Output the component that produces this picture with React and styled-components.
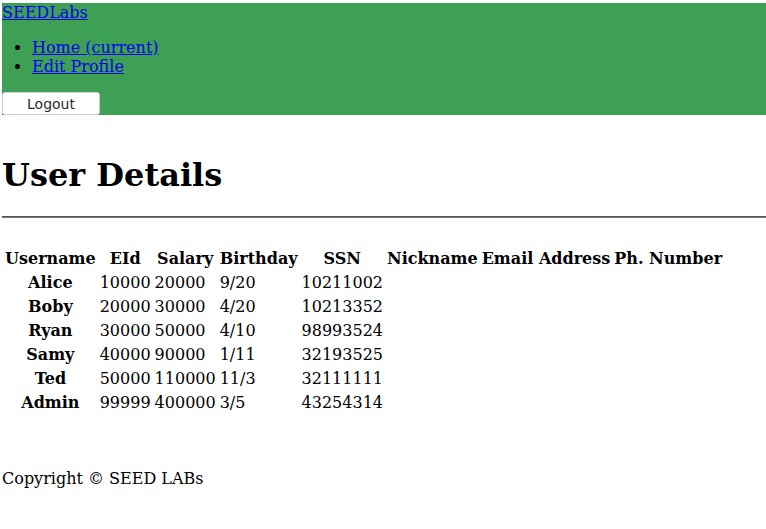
import React from "react";
import styled, { createGlobalStyle } from "styled-components";

const GlobalStyle = createGlobalStyle`
  body {
    margin: 3px 0 0 2px;
    font-family: "DejaVu Serif", serif;
    font-size: 16px;
    color: #000;
    background: #fff;
  }
`;

const NavBar = styled.nav`
  background-color: #3ea055;
`;

const Brand = styled.a`
  color: #0000ee;
  text-decoration: underline;
`;

const NavList = styled.ul`
  margin: 16px 0;
  padding-left: 30px;
`;

const NavLink = styled.a`
  color: #0000ee;
  text-decoration: underline;
`;

const LogoutButton = styled.button`
  display: block;
  width: 98px;
  height: 23px;
  padding: 1px 0 0;
  font-family: "DejaVu Sans", sans-serif;
  font-size: 14px;
  color: #2a2a2a;
  background: #fff;
  border: 1px solid #d0d0d0;
  border-radius: 3px;
`;

const Title = styled.h1`
  font-size: 32px;
  margin: 41px 0 22px;
`;

const Rule = styled.hr`
  margin: 0;
  border: none;
  border-top: 1px solid #555;
  border-bottom: 1px solid #777;
`;

const Table = styled.table`
  margin-top: 28px;
  border-spacing: 2px;
  td,
  th {
    padding: 1px;
    line-height: 20px;
  }
  td {
    text-align: left;
  }
`;

const Footer = styled.div`
  margin-top: 53px;
`;

const users = [
  ["Alice", "10000", "20000", "9/20", "10211002"],
  ["Boby", "20000", "30000", "4/20", "10213352"],
  ["Ryan", "30000", "50000", "4/10", "98993524"],
  ["Samy", "40000", "90000", "1/11", "32193525"],
  ["Ted", "50000", "110000", "11/3", "32111111"],
  ["Admin", "99999", "400000", "3/5", "43254314"],
];

const headers = [
  "Username",
  "EId",
  "Salary",
  "Birthday",
  "SSN",
  "Nickname",
  "Email Address",
  "Ph. Number",
];

export default function App() {
  return (
    <>
      <GlobalStyle />
      <NavBar>
        <Brand href="#">SEEDLabs</Brand>
        <NavList>
          <li>
            <NavLink href="#">Home (current)</NavLink>
          </li>
          <li>
            <NavLink href="#">Edit Profile</NavLink>
          </li>
        </NavList>
        <LogoutButton type="button">Logout</LogoutButton>
      </NavBar>

      <Title>User Details</Title>
      <Rule />

      <Table>
        <thead>
          <tr>
            {headers.map((h) => (
              <th key={h}>{h}</th>
            ))}
          </tr>
        </thead>
        <tbody>
          {users.map(([name, eid, salary, bday, ssn]) => (
            <tr key={name}>
              <th>{name}</th>
              <td>{eid}</td>
              <td>{salary}</td>
              <td>{bday}</td>
              <td>{ssn}</td>
              <td></td>
              <td></td>
              <td></td>
            </tr>
          ))}
        </tbody>
      </Table>

      <Footer>Copyright © SEED LABs</Footer>
    </>
  );
}
